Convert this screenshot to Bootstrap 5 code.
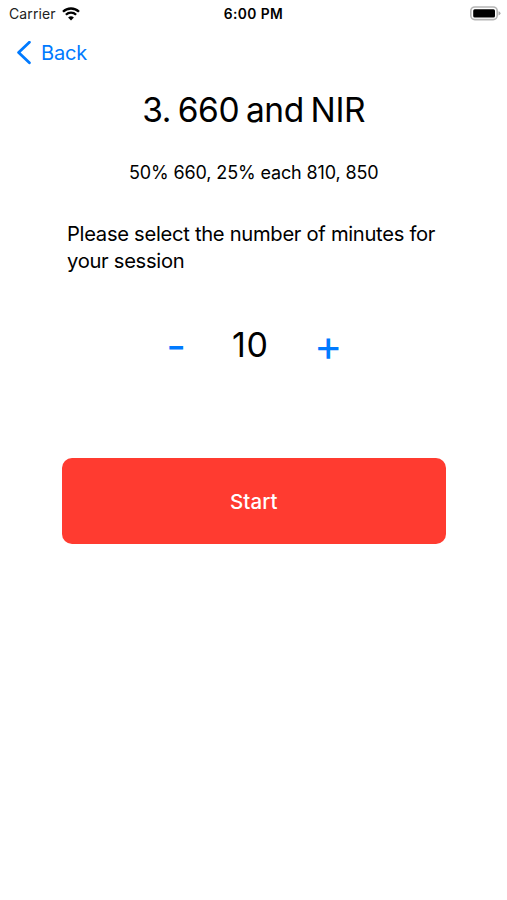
<!DOCTYPE html>
<html lang="en">
<head>
<meta charset="utf-8">
<meta name="viewport" content="width=device-width, initial-scale=1">
<title>Session</title>
<link href="https://cdn.jsdelivr.net/npm/bootstrap@5.3.0/dist/css/bootstrap.min.css" rel="stylesheet">
<style>
body { font-family: Inter, "Liberation Sans", sans-serif; color: #000; background: #fff; min-height: 900px; }
svg { display: block; }
.status-bar { height: 27px; padding: 0 6px 0 9px; font-size: 14px; line-height: 28px; }
.status-bar > div { flex: 1 1 0; }
.carrier-name { color: #222; letter-spacing: .12px; margin-right: 6px; }
.clock { font-size: 13.8px; letter-spacing: .4px; padding-right: 3px; }
.nav-top { height: 51px; padding-left: 16px; }
.back-btn { color: #007aff; font-size: 20px; line-height: 51px; gap: 9px; letter-spacing: -.2px; }
.back-btn span { padding-top: 1px; }
.session { padding: 0 61.5px 0 62px; }
.title { font-size: 33.5px; line-height: 40px; margin-top: 12px; letter-spacing: -.35px; word-spacing: -2.5px; font-weight: 400; }
.subtitle { font-size: 18px; line-height: 24px; margin-top: 31px; letter-spacing: -.13px; }
.prompt { font-size: 20.2px; line-height: 27px; margin: 35px 0 0 5px; letter-spacing: -.3px; }
.stepper { height: 50px; margin-top: 46px; padding-right: 3px; }
.stepper .btn { color: #007aff; font-size: 43px; line-height: 48px; height: 50px; width: 44px; }
.minutes { font-size: 34px; line-height: 50px; width: 108px; padding-right: 4px; letter-spacing: .6px; }
.start-btn { background: #ff3b30; color: #fff; height: 86px; margin-top: 88px; border-radius: 10px; font-size: 20.5px; font-weight: 500; letter-spacing: .1px; }
.start-btn span { display: block; padding-top: 2px; }
</style>
</head>
<body>
<header>
  <div class="status-bar d-flex">
    <div class="d-flex align-items-center">
      <span class="carrier-name">Carrier</span>
      <svg width="18" height="14" viewBox="0 0 18 14" fill="none" stroke="#000" stroke-width="2.3"><path d="M1 4.8a11.3 11.3 0 0 1 16 0M3.9 7.8a7.2 7.2 0 0 1 10.2 0"/><path d="M9 13.5 6.1 10.6a4.1 4.1 0 0 1 5.8 0Z" fill="#000" stroke="none"/></svg>
    </div>
    <div class="clock fw-semibold text-center">6:00 PM</div>
    <div class="d-flex align-items-center justify-content-end">
      <svg width="31" height="15" viewBox="0 0 31 15"><rect x=".8" y="1" width="26.4" height="12.6" rx="4" fill="#fff" stroke="#b5b5b5" stroke-width="1.6"/><rect x="3.2" y="3.2" width="21.8" height="8.4" rx="1.5" fill="#000"/><path d="M28.5 5.2q2 .7 2 2.1t-2 2.1Z" fill="#aaa"/></svg>
    </div>
  </div>
  <nav class="nav-top">
    <a href="#" class="back-btn d-inline-flex align-items-center text-decoration-none">
      <svg width="16" height="24" viewBox="0 0 16 24" fill="none" stroke="currentColor" stroke-width="2.8" stroke-linecap="round" stroke-linejoin="round"><path d="M13.4 1.2 2.6 11.5 13.4 21.8"/></svg>
      <span>Back</span>
    </a>
  </nav>
</header>
<main class="session">
  <h1 class="title text-center text-nowrap mb-0">3. 660 and NIR</h1>
  <p class="subtitle text-center text-nowrap mb-0">50% 660, 25% each 810, 850</p>
  <p class="prompt text-nowrap">Please select the number of minutes for<br>your session</p>
  <div class="stepper d-flex justify-content-center align-items-center">
    <button type="button" class="btn border-0 p-0">-</button>
    <div class="minutes text-center">10</div>
    <button type="button" class="btn border-0 p-0">+</button>
  </div>
  <button type="button" class="start-btn btn border-0 w-100 p-0"><span>Start</span></button>
</main>
<script src="https://cdn.jsdelivr.net/npm/bootstrap@5.3.0/dist/js/bootstrap.bundle.min.js"></script>
</body>
</html>
